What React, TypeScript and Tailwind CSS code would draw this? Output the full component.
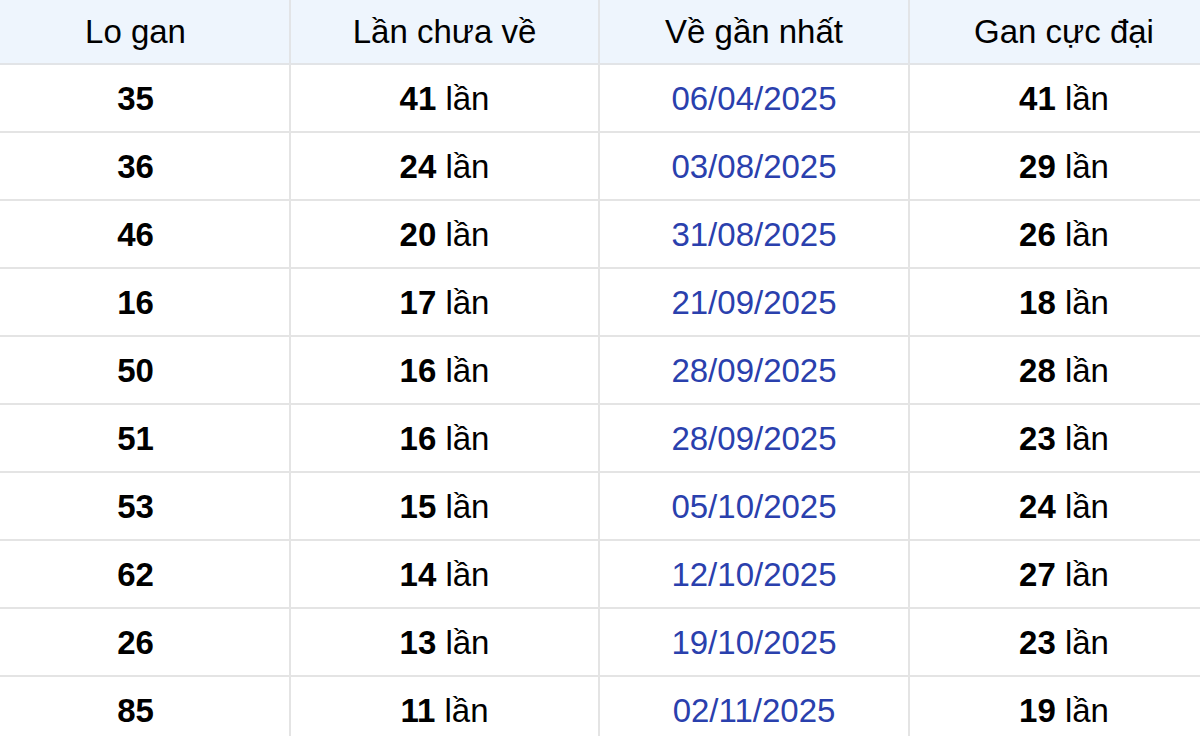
import React from 'react';

// rows of the lo gan table
const ROWS = [
  { so: '35', chua: 41, ngay: '06/04/2025', max: 41 },
  { so: '36', chua: 24, ngay: '03/08/2025', max: 29 },
  { so: '46', chua: 20, ngay: '31/08/2025', max: 26 },
  { so: '16', chua: 17, ngay: '21/09/2025', max: 18 },
  { so: '50', chua: 16, ngay: '28/09/2025', max: 28 },
  { so: '51', chua: 16, ngay: '28/09/2025', max: 23 },
  { so: '53', chua: 15, ngay: '05/10/2025', max: 24 },
  { so: '62', chua: 14, ngay: '12/10/2025', max: 27 },
  { so: '26', chua: 13, ngay: '19/10/2025', max: 23 },
  { so: '85', chua: 11, ngay: '02/11/2025', max: 19 },
];

export default function App() {
  return (
    <div
      className="w-[1200px] h-[736px] overflow-hidden bg-white text-black"
      style={{ fontFamily: '"Liberation Sans", Arial, sans-serif' }}
    >
      <table className="w-full border-collapse table-fixed text-[33px] leading-none">
        <colgroup>
          <col className="w-[290px]" />
          <col className="w-[309px]" />
          <col className="w-[310px]" />
          <col />
        </colgroup>
        <thead>
          <tr className="h-[64px] bg-[#eef5fd]">
            <th className="pr-[18px] font-normal text-center border-r-2 border-b-2 border-[#e2e4e7]">Lo gan</th>
            <th className="font-normal text-center border-r-2 border-b-2 border-[#e2e4e7]">Lần chưa về</th>
            <th className="font-normal text-center border-r-2 border-b-2 border-[#e2e4e7]">Về gần nhất</th>
            <th className="pl-[18px] font-normal text-center border-b-2 border-[#e2e4e7]">Gan cực đại</th>
          </tr>
        </thead>
        <tbody>
          {ROWS.map((r, i) => (
            <tr key={i} className="h-[68px]">
              <td className="pr-[18px] text-center font-bold border-r-2 border-b-2 border-[#e4e4e4]">{r.so}</td>
              <td className="text-center border-r-2 border-b-2 border-[#e4e4e4]">
                <span className="font-bold">{r.chua}</span> lần
              </td>
              <td className="text-center text-[#2a40ad] border-r-2 border-b-2 border-[#e4e4e4]">{r.ngay}</td>
              <td className="pl-[18px] text-center border-b-2 border-[#e4e4e4]">
                <span className="font-bold">{r.max}</span> lần
              </td>
            </tr>
          ))}
        </tbody>
      </table>
    </div>
  );
}
